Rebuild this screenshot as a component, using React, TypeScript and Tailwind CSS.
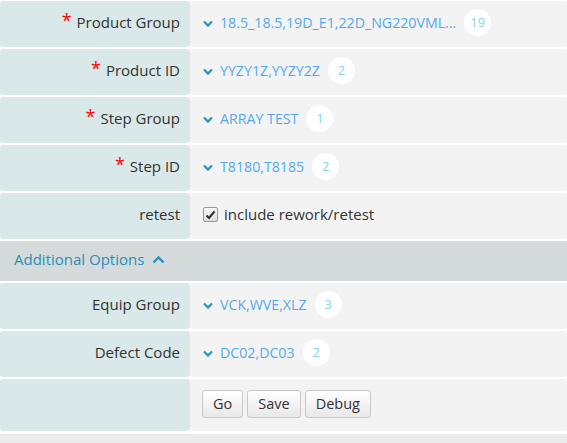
import React from "react";

const font = { fontFamily: '"Open Sans", "Noto Sans", sans-serif' };

function Chevron({ up = false, className = "" }: { up?: boolean; className?: string }) {
  return up ? (
    <svg width="13" height="9" viewBox="0 0 13 9" className={className}>
      <path d="M1.5 7.5 L6.5 2.5 L11.5 7.5" fill="none" stroke="currentColor" strokeWidth="2.4" />
    </svg>
  ) : (
    <svg width="10" height="7" viewBox="0 0 10 7" className={className}>
      <path d="M1 1.5 L5 5.5 L9 1.5" fill="none" stroke="currentColor" strokeWidth="2.4" />
    </svg>
  );
}

function Row({
  label,
  required = false,
  children,
  h = "h-[46px]",
}: {
  label?: string;
  required?: boolean;
  children: React.ReactNode;
  h?: string;
}) {
  return (
    <div className={`flex ${h} mt-[2px]`}>
      <div className="w-[190px] shrink-0 bg-[#d9e8e8] rounded-[3px] flex items-center justify-end pr-[10px] pb-[3px] text-[15px] text-[#333]">
        {required && (
          <span className="text-[#ff0000] text-[18px] leading-none mr-[5px] relative top-[-3px]">*</span>
        )}
        {label}
      </div>
      <div className="flex-1 bg-[#f3f3f3] rounded-[3px] flex items-center pl-[13px] pb-[3px] text-[15px]">
        {children}
      </div>
    </div>
  );
}

function Select({ value, count }: { value: string; count: string }) {
  return (
    <div className="flex items-center">
      <Chevron className="text-[#2f95bb] mr-[7px] relative top-[1px]" />
      <span className="text-[#55a9ef] text-[14.2px]">{value}</span>
      <span className="ml-[8px] w-[27px] h-[27px] rounded-full bg-white flex items-center justify-center text-[13px] text-[#7fd4ea]">
        {count}
      </span>
    </div>
  );
}

function Btn({ children }: { children: React.ReactNode }) {
  return (
    <button className="h-[28px] px-[10px] rounded-[3px] border border-[#c8c8c8] bg-gradient-to-b from-[#ffffff] to-[#e8e8e8] text-[14.5px] text-[#333]">
      {children}
    </button>
  );
}

export default function App() {
  return (
    <div className="w-[567px] h-[443px] bg-white overflow-hidden" style={font}>
      <div className="mt-[-1px]">
        <Row label="Product Group" required>
          <Select value="18.5_18.5,19D_E1,22D_NG220VML..." count="19" />
        </Row>
        <Row label="Product ID" required>
          <Select value="YYZY1Z,YYZY2Z" count="2" />
        </Row>
        <Row label="Step Group" required>
          <Select value="ARRAY TEST" count="1" />
        </Row>
        <Row label="Step ID" required>
          <Select value="T8180,T8185" count="2" />
        </Row>
        <Row label="retest">
          <div className="flex items-center">
            <span className="w-[15px] h-[15px] border border-[#9a9a9a] rounded-[2px] bg-gradient-to-b from-[#fafafa] to-[#dcdcdc] flex items-center justify-center">
              <svg width="11" height="10" viewBox="0 0 11 10">
                <path d="M1.5 5.5 L4 8 L9.5 1.5" fill="none" stroke="#333" strokeWidth="2.2" />
              </svg>
            </span>
            <span className="ml-[6px] text-[#333]">include rework/retest</span>
          </div>
        </Row>
        <div className="mt-[2px] h-[40px] bg-[#d5dbdb] flex items-center pl-[14px] pb-[3px] text-[15px] text-[#2a8fbd]">
          Additional Options
          <Chevron up className="ml-[8px]" />
        </div>
        <Row label="Equip Group">
          <Select value="VCK,WVE,XLZ" count="3" />
        </Row>
        <Row label="Defect Code">
          <Select value="DC02,DC03" count="2" />
        </Row>
        <Row h="h-[52px]">
          <div className="flex gap-[4px] ml-[-1px] mt-[1px]">
            <Btn>Go</Btn>
            <Btn>Save</Btn>
            <Btn>Debug</Btn>
          </div>
        </Row>
        <div className="mt-[3px] h-[20px] bg-[#ebebeb]" />
      </div>
    </div>
  );
}
